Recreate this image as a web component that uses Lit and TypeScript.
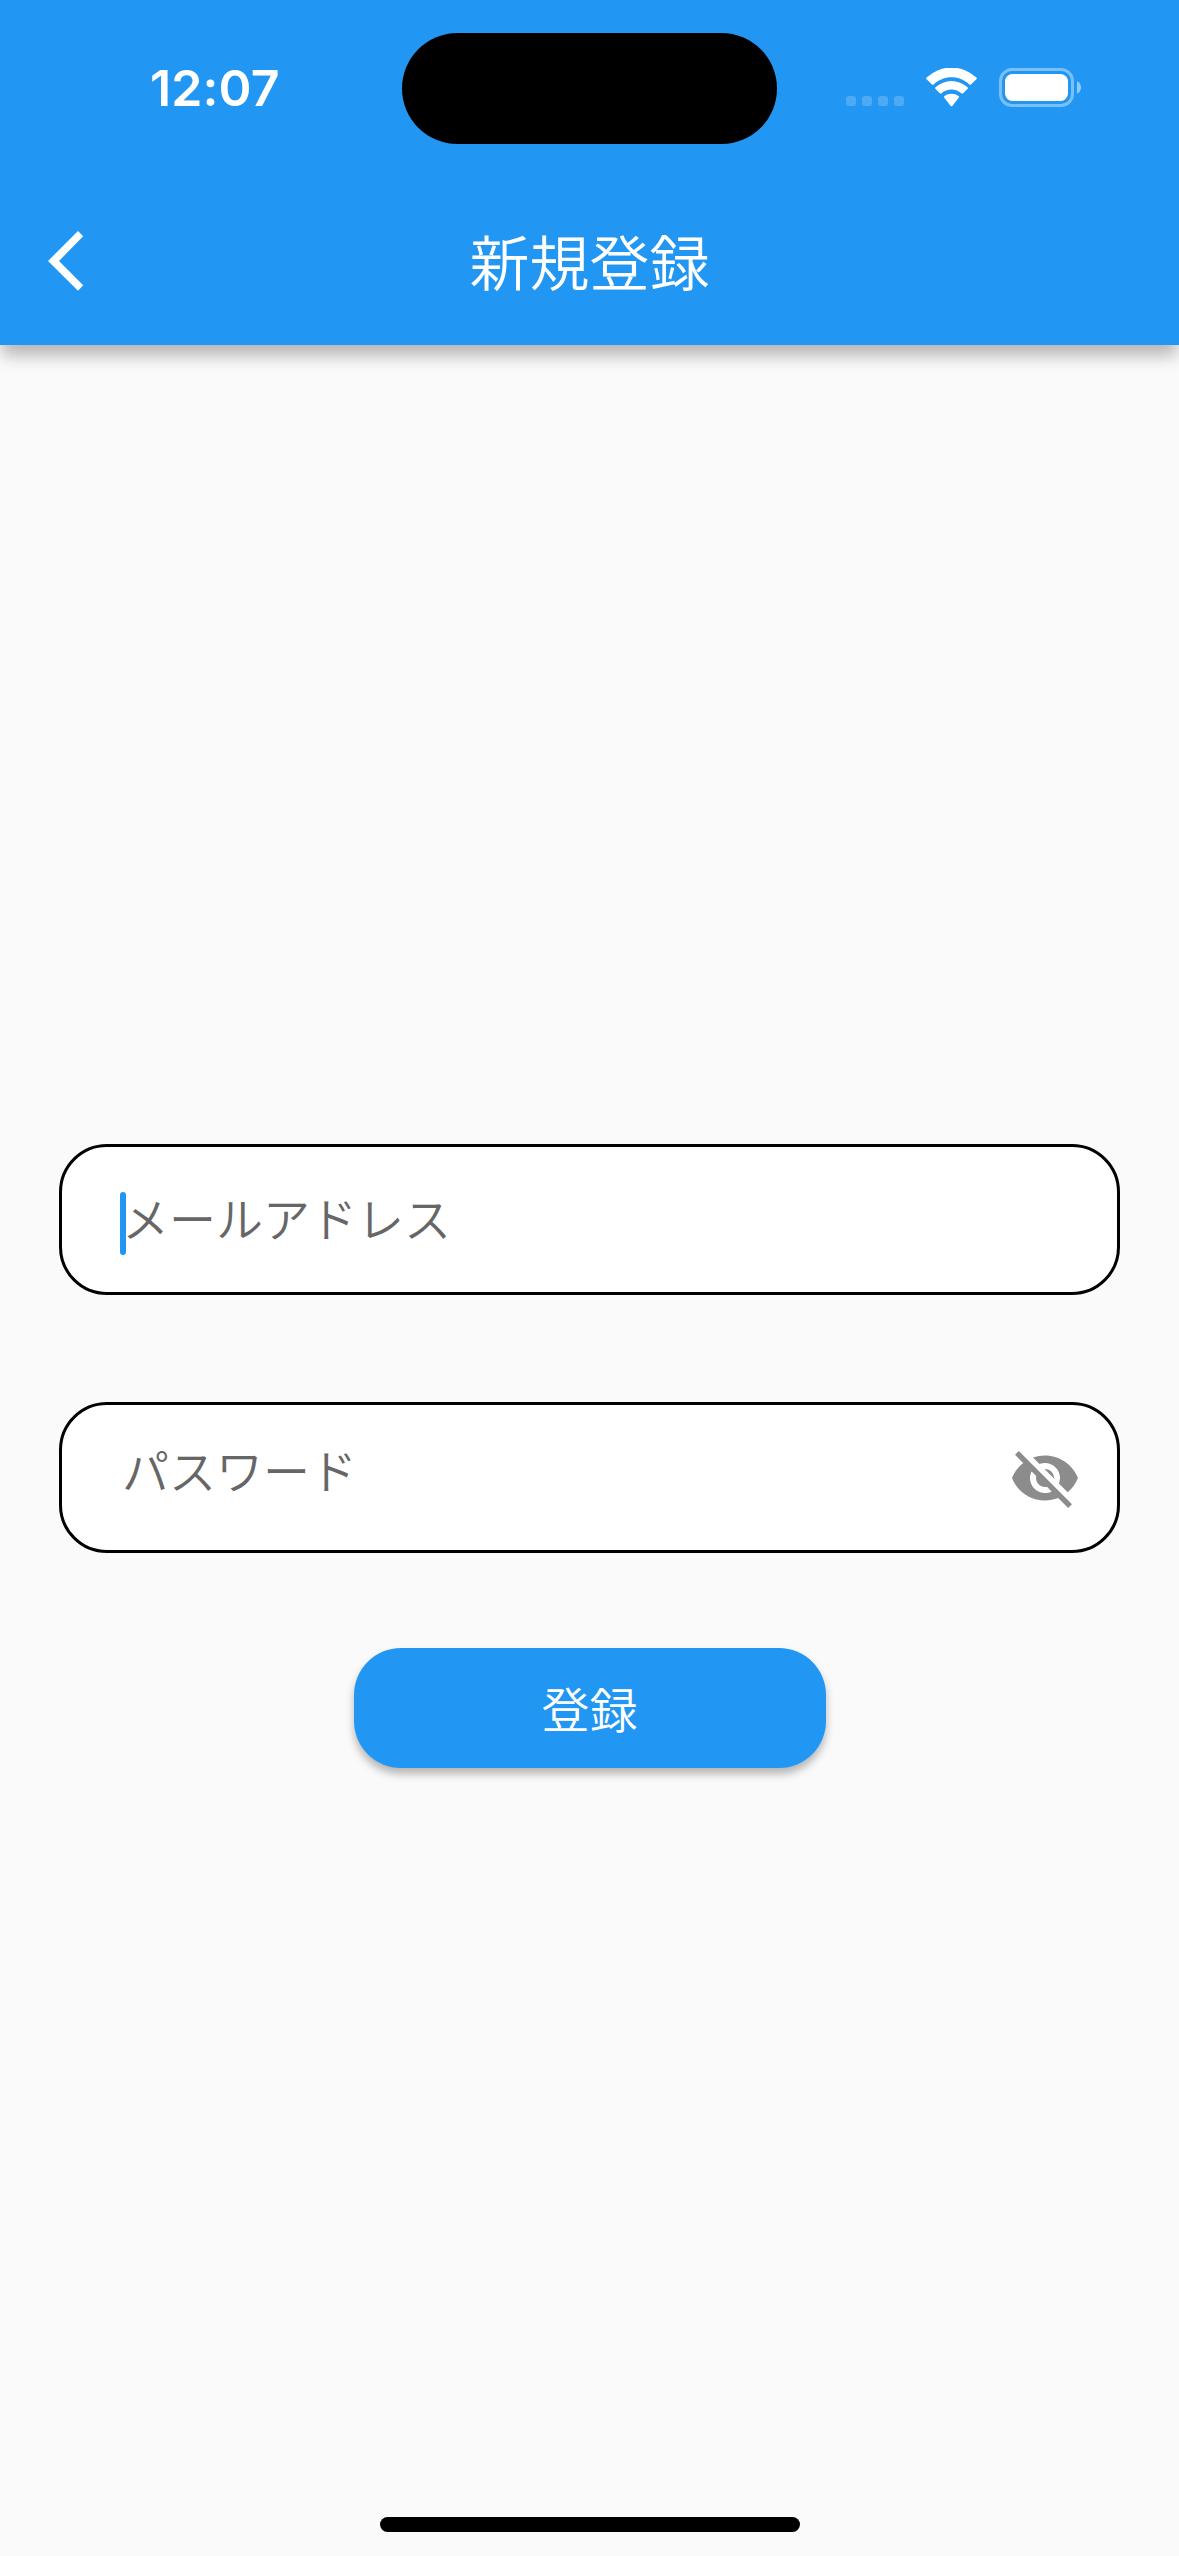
import { LitElement, html, css } from "lit";
import { customElement, property } from "lit/decorators.js";

@customElement("status-bar")
class StatusBar extends LitElement {
  static styles = css`
    :host {
      display: grid;
      grid-template-columns: 1fr 375px 1fr;
      height: 111px;
      padding-top: 33px;
      color: #fff;
    }
    .time {
      padding: 25px 0 0 150px;
      font: 600 50px/61px Inter, "Liberation Sans", sans-serif;
      letter-spacing: 0.1px;
    }
    .island {
      border-radius: 56px;
      background: #000;
    }
    .icons {
      display: block;
      margin-left: 69px;
      margin-top: 35px;
    }
  `;
  render() {
    return html`
      <div class="time">12:07</div>
      <div class="island"></div>
      <svg class="icons" width="236" height="40" viewBox="0 0 236 40" fill="#fff">
        <g fill-opacity="0.2">
          <rect x="0" y="28" width="10" height="10" rx="3" />
          <rect x="16" y="28" width="10" height="10" rx="3" />
          <rect x="32" y="28" width="10" height="10" rx="3" />
          <rect x="48" y="28" width="10" height="10" rx="3" />
        </g>
        <g transform="translate(0 0.4)">
          <path d="M105.500 8.900c6.900 0 13.200 2.700 17.900 7.100a1.100 1.100 0 0 0 1.600 0l5.400-5.200a1.100 1.100 0 0 0 0-1.600a36 36 0 0 0-49.800 0a1.100 1.100 0 0 0 0 1.600l5.400 5.200a1.100 1.100 0 0 0 1.600 0c4.700-4.400 11-7.100 17.900-7.100z" />
          <path d="M105.500 21.200c3.800 0 7.200 1.400 9.900 3.700a1.200 1.200 0 0 0 1.700 0l4.400-4.400a1.100 1.100 0 0 0 0-1.600a23.500 23.500 0 0 0-32 0a1.100 1.100 0 0 0 0 1.600l4.400 4.400a1.200 1.200 0 0 0 1.700 0a15 15 0 0 1 9.900-3.700z" />
          <path d="M112.700 29.400a1.100 1.100 0 0 0-.1-1.700a11.500 11.500 0 0 0-14.200 0a1.100 1.100 0 0 0-.1 1.700l6.400 8.100q.8.800 1.600 0z" />
        </g>
        <rect x="154.500" y="1.500" width="72" height="36" rx="11.500" fill="none" stroke="#fff" stroke-opacity="0.400" stroke-width="3" />
        <rect x="159" y="6" width="63" height="27" rx="7.500" />
        <path d="M231 13.200c2.600 1.100 4 3.600 4 6.300s-1.400 5.200-4 6.300z" fill-opacity="0.500" />
      </svg>
    `;
  }
}

@customElement("nav-bar")
class NavBar extends LitElement {
  @property() title = "";
  static styles = css`
    :host {
      display: grid;
      grid-template-columns: 1fr auto 1fr;
      align-items: center;
      height: 168px;
      color: #fff;
    }
    .back {
      display: block;
      margin-left: 47px;
    }
    .title {
      padding-bottom: 2px;
      font: 350 60px/88px "Noto Sans CJK JP DemiLight", "Noto Sans CJK JP", sans-serif;
    }
  `;
  render() {
    return html`
      <svg class="back" width="38" height="62" viewBox="0 0 38 62" fill="#fff">
        <path d="M31 1L36.200 6.200L12 31L36.200 55.300L31 60.800L1 31z" />
      </svg>
      <div class="title">${this.title}</div>
    `;
  }
}

@customElement("text-field")
class TextField extends LitElement {
  @property() placeholder = "";
  @property({ type: Boolean }) active = false;
  @property({ type: Boolean }) secret = false;
  static styles = css`
    :host {
      display: block;
    }
    .box {
      position: relative;
      display: flex;
      justify-content: space-between;
      box-sizing: border-box;
      height: 151px;
      padding: 0 36px 0 60px;
      border: 3px solid #000;
      border-radius: 48px;
      background: #fff;
    }
    .hint {
      padding-top: 35px;
      font: 350 47px/70px "Noto Sans CJK JP DemiLight", "Noto Sans CJK JP", sans-serif;
      color: #666;
    }
    .secret .hint {
      padding-top: 29px;
    }
    .caret {
      position: absolute;
      left: 58px;
      top: 45px;
      width: 6px;
      height: 63px;
      border-radius: 3px;
      background: #2196f3;
    }
    .eye {
      margin-top: 37px;
    }
  `;
  render() {
    return html`
      <div class="box ${this.secret ? "secret" : ""}">
        <span class="hint">${this.placeholder}</span>
        ${this.active ? html`<span class="caret"></span>` : null}
        ${this.secret
          ? html`<svg class="eye" width="72" height="72" viewBox="0 0 24 24" fill="#8c8c8c">
              <path d="M12 7c2.760 0 5 2.240 5 5 0 .65-.13 1.260-.36 1.830l2.920 2.920c1.510-1.260 2.700-2.890 3.430-4.750-1.730-4.390-6-7.500-11-7.500-1.400 0-2.740.25-3.980.7l2.160 2.160C10.740 7.130 11.350 7 12 7zM2 4.270l2.280 2.280.46.46C3.080 8.300 1.780 10.020 1 12c1.730 4.390 6 7.500 11 7.500 1.550 0 3.030-.3 4.380-.84l.42.42L19.730 22 21 20.730 3.270 3 2 4.270zM7.530 9.800l1.550 1.550c-.05.21-.08.43-.08.65 0 1.660 1.340 3 3 3 .22 0 .44-.03.65-.08l1.550 1.550c-.67.33-1.410.53-2.200.53-2.760 0-5-2.240-5-5 0-.79.2-1.530.53-2.200zm4.310-.78l3.150 3.150.02-.16c0-1.660-1.340-3-3-3l-.17.010z" />
            </svg>`
          : null}
      </div>
    `;
  }
}

@customElement("app-root")
class AppRoot extends LitElement {
  static styles = css`
    :host {
      display: block;
    }
    .screen {
      display: flex;
      flex-direction: column;
      height: 2556px;
      overflow: hidden;
      background: #fafafa;
    }
    .header {
      display: flex;
      flex-direction: column;
      gap: 33px;
      height: 345px;
      background: #2196f3;
      box-shadow: 0 12px 15px -3px rgba(0, 0, 0, 0.2), 0 12px 18px rgba(0, 0, 0, 0.1);
    }
    .form {
      flex: 1;
      display: flex;
      flex-direction: column;
      padding: 799px 59px 0;
    }
    .password {
      margin-top: 107px;
    }
    .submit {
      align-self: center;
      width: 472px;
      height: 120px;
      margin-top: 95px;
      padding: 0 0 2px;
      border: 0;
      border-radius: 47px;
      background: #2196f3;
      color: #fff;
      font: 350 48px/70px "Noto Sans CJK JP DemiLight", "Noto Sans CJK JP", sans-serif;
      box-shadow: 0 6px 8px rgba(0, 0, 0, 0.28);
    }
    .home {
      align-self: center;
      width: 420px;
      height: 15px;
      margin-bottom: 24px;
      border-radius: 8px;
      background: #000;
    }
  `;
  render() {
    return html`
      <div class="screen">
        <div class="header">
          <status-bar></status-bar>
          <nav-bar title="新規登録"></nav-bar>
        </div>
        <div class="form">
          <text-field placeholder="メールアドレス" active></text-field>
          <text-field class="password" placeholder="パスワード" secret></text-field>
          <button class="submit">登録</button>
        </div>
        <div class="home"></div>
      </div>
    `;
  }
}
